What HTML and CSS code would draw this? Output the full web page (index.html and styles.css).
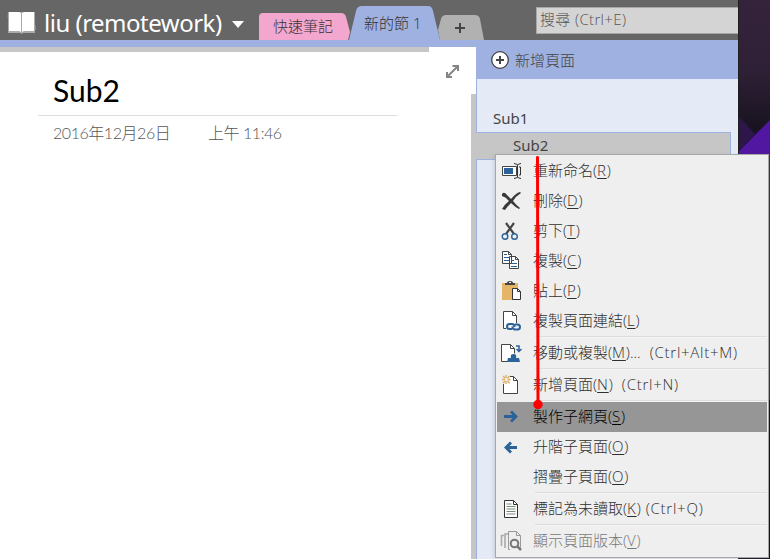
FILE: index.html
```html
<!DOCTYPE html>
<html lang="zh-Hant">
<head>
<meta charset="utf-8">
<title>Sub2</title>
<link rel="stylesheet" href="styles.css">
</head>
<body>
<div class="screen">
  <svg class="wallpaper" width="32" height="559" viewBox="0 0 32 559">
    <defs><linearGradient id="wall" x1="0" y1="0" x2="0" y2="1"><stop offset="0" stop-color="#35233c"/><stop offset=".55" stop-color="#2e2036"/><stop offset="1" stop-color="#181320"/></linearGradient></defs>
    <rect width="32" height="559" fill="#1c1229"/><rect width="32" height="130" fill="url(#wall)"/>
    <path d="M0 115L17 134L0 151Z" fill="#2c164a"/><path d="M32 120L0 152V400H32Z" fill="#5117a0"/><path d="M0 400H32V559H0Z" fill="#180c2b"/>
    <path d="M.5 0V559" stroke="#202020"/>
  </svg>
  <main class="window">
    <header class="topbar">
      <svg class="book" width="30" height="23" viewBox="0 0 30 23"><path fill="#d84e2b" d="M0 2h4v5H0z"/><path fill="#2f79bd" d="M25 8h4v5h-4z"/><path fill="#4aa088" d="M25 14h4v5h-4z"/><path fill="#aaa" d="M1 1h27v21H16l-1.500 1L13 22H1z"/><path fill="#fff" d="M2 1h10l2 1v19l-2-1H2zM15 2l2-1h10v19H17l-2 1z"/></svg>
      <span class="notebook">liu (remotework)</span>
      <svg class="caret" width="12" height="8" viewBox="0 0 12 8"><path fill="#fff" d="M0 1h12L6 8z"/></svg>
      <nav class="tabs">
        <div class="tab quick"><svg width="92" height="27" viewBox="0 0 92 27"><path fill="#f3a6ce" d="M0 27V4Q0 0 4 0H82Q86 0 87 4L91 19L89 27Z"/></svg><span>快速筆記</span></div>
        <div class="tab current"><svg width="92" height="34" viewBox="0 0 92 34"><path fill="#9fb1e1" d="M0 34L7 5Q8 0 13 0H79Q83 0 84 5L91 34Z"/></svg><span>新的節 1</span></div>
        <div class="tab add"><svg width="46" height="25" viewBox="0 0 46 25"><path fill="#b1b1b1" d="M2 25L0 15L3 4Q4 0 8 0H37Q41 0 42 4L46 25Z"/><path d="M22 8v10M17 13h10" stroke="#444" stroke-width="2"/></svg></div>
      </nav>
      <div class="search">搜尋 (Ctrl+E)</div>
    </header>
    <div class="workspace">
      <section class="editor">
        <div class="canvas">
          <div class="ruler"></div>
          <svg class="expand" width="13" height="13" viewBox="0 0 13 13"><path d="M2 11L11 2M6.500 1H12V6M1 7v5h5" fill="none" stroke="#858585" stroke-width="2"/></svg>
          <h1>Sub2</h1>
          <div class="stamp"><span class="date">2016年12月26日</span><span class="time">上午 11:46</span></div>
        </div>
        <div class="scroll"></div>
      </section>
      <aside class="pages">
        <div class="new-page"><svg width="18" height="18" viewBox="0 0 18 18"><circle cx="9" cy="9" r="8.300" fill="#fff" stroke="#444" stroke-width="1.300"/><path d="M9 5v8M5 9h8" stroke="#444" stroke-width="2"/></svg><span>新增頁面</span></div>
        <div class="list"><div class="page">Sub1</div><div class="page chosen">Sub2</div><div class="rest"></div></div>
      </aside>
    </div>
  </main>
  <div class="menu">
    <div class="item"><svg viewBox="0 0 20 20"><path fill="#fff" stroke="#444" d="M.5 5.500H14.500V14.500H.5z"/><path fill="#2b6299" d="M2 7h9v6H2z"/><path d="M15.500 4v12M12 2.500l3.500 1L19 2.500M12 17.500l3.500-1 3.500 1M17 6h1.500v8H17" fill="none" stroke="#333"/></svg><span>重新命名(<u>R</u>)</span></div>
    <div class="item"><svg viewBox="0 0 20 20"><path fill="#383838" d="M0 3Q2 0 5 4L9 8Q14 2 18 1L19 2Q14 5 11 10Q15 15 18 17L17 18Q13 16 9 12Q5 16 3 19L0 18Q3 13 7 10Q4 6 0 5Z"/></svg><span>刪除(<u>D</u>)</span></div>
    <div class="item"><svg viewBox="0 0 20 20"><path d="M4 2l8 11M12 2L4 13" stroke="#444" stroke-width="2.200"/><circle cx="3" cy="15.500" r="2.800" fill="#efefef" stroke="#2b6299" stroke-width="1.400"/><circle cx="12.500" cy="15.500" r="2.800" fill="#efefef" stroke="#2b6299" stroke-width="1.400"/></svg><span>剪下(<u>T</u>)</span></div>
    <div class="item"><svg viewBox="0 0 20 20"><path fill="#fff" stroke="#444" d="M.5 .5h6l3 3v9h-9zM7.500 5.500h6l3 3v9h-9z"/><path d="M6.500 .5v3h3M13.500 5.500v3h3" fill="none" stroke="#444"/><path d="M2 3.500h3M2 6.500h5M2 9.500h5M9 9.500h3M9 12.500h6M9 15.500h6" stroke="#2b6299"/></svg><span>複製(<u>C</u>)</span></div>
    <div class="item"><svg viewBox="0 0 20 20"><path fill="#e5b567" d="M0 2h16v17H0z"/><path fill="#444" d="M3 4V2h2q0-2 3-2t3 2h2v2z"/><path fill="#efefef" d="M7 1h2v1H7z"/><path fill="#fff" stroke="#333" d="M10.500 7.500h5l3 3v8h-8z"/><path d="M15.500 7.500v3h3" fill="none" stroke="#333"/></svg><span>貼上(<u>P</u>)</span></div>
    <div class="item"><svg viewBox="0 0 20 20"><path fill="#fff" stroke="#444" d="M1.500 .5h9l4 4v13h-13z"/><path d="M10.500 .5v4h4" fill="none" stroke="#444"/><path d="M4 12h15v8H4z" fill="#efefef"/><path d="M10 18H7.500q-2.500 0-2.500-2.500T7.500 13H10q2.500 0 2.500 3M13 13.500h2.500q2.500 0 2.500 2.500t-2.500 2.500H13q-2.500 0-2.500-3" fill="none" stroke="#2b6299" stroke-width="2"/></svg><span>複製頁面連結(<u>L</u>)</span></div>
    <hr>
    <div class="item"><svg viewBox="0 0 20 20"><path fill="#fff" d="M0 1h9l4 4v13H0z"/><path d="M6 18.500H-.5v-17h9l4 4v5M8.500 1.500v4h4" fill="none" stroke="#444"/><path d="M5 19l1-4h3q-1-4 2.500-4t2.500 4h3l1 4z" fill="#2b6299"/><path d="M14 3h3v5M14.500 6l2.500 2.500L19.500 6" fill="none" stroke="#2b6299" stroke-width="1.500"/></svg><span>移動或複製(<u>M</u>)...<i class="key wide">(Ctrl+Alt+M)</i></span></div>
    <hr>
    <div class="item"><svg viewBox="0 0 20 20"><path fill="#fff" stroke="#444" d="M1.500 6.500V18.500h14V5.500l-4-4h-4v5z"/><path fill="#efefef" d="M0 0h8v9H0z"/><path d="M11.500 1.500v4h4" fill="none" stroke="#444"/><path d="M4 0v3M4 6v3M0 4.500h3M5.500 4.500h3M1 1l2 2M5.500 6l2 2M7.500 1l-2 2M3 6L1 8" stroke="#e0ac60" stroke-width="1.300"/></svg><span>新增頁面(<u>N</u>)<i class="key wide">(Ctrl+N)</i></span></div>
    <hr>
    <div class="item active"><svg viewBox="0 0 20 20"><path d="M2 9.500h11M9 4.500l5 5-5 5" fill="none" stroke="#2b6299" stroke-width="2.800"/></svg><span>製作子網頁(<u>S</u>)</span></div>
    <div class="item"><svg viewBox="0 0 20 20"><path d="M4 10.500h11M9 5.500l-5 5 5 5" fill="none" stroke="#2b6299" stroke-width="2.800"/></svg><span>升階子頁面(<u>O</u>)</span></div>
    <div class="item"><svg viewBox="0 0 20 20"></svg><span>摺疊子頁面(<u>O</u>)</span></div>
    <hr>
    <div class="item"><svg viewBox="0 0 20 20"><path fill="#fff" stroke="#333" d="M2.500 1.500h9l4 4v13h-13z"/><path d="M11.500 1.500v4h4" fill="none" stroke="#333"/><path d="M4.500 5h5M4.500 7.500h9M4.500 10h9M4.500 12.500h9M4.500 15h9" stroke="#788b79"/></svg><span>標記為未讀取(<u>K</u>)<i class="key">(Ctrl+Q)</i></span></div>
    <hr>
    <div class="item disabled"><svg viewBox="0 0 20 20"><path d="M-.5 15V4.500H2M3 17V3h3" fill="none" stroke="#aaa" stroke-width="1.600"/><path d="M8 18.500H6.500V.5h8l4 4v12M14.500 .5v4h4" fill="none" stroke="#999"/><path d="M15.500 15.500l3.500 3.500" stroke="#777" stroke-width="2.500"/><circle cx="12.500" cy="12.500" r="3.800" fill="#efefef" stroke="#777" stroke-width="2"/></svg><span>顯示頁面版本(<u>V</u>)</span></div>
  </div>
  <svg class="pointer" width="12" height="254" viewBox="0 0 12 254"><path d="M5.500 2.500L6 249" stroke="#fe0000" stroke-width="3" stroke-linecap="round"/><circle cx="6" cy="249.500" r="4.700" fill="#fe0000"/></svg>
</div>
</body>
</html>
```
FILE: styles.css
```css
* { box-sizing: border-box; }
body { margin: 0; font: 300 15px "Open Sans", "Noto Sans CJK TC", sans-serif; color: #444; }
.screen { position: relative; width: 770px; height: 559px; overflow: hidden; background: #c4c8d8; }
.wallpaper { position: absolute; left: 738px; top: 0; }
.window { width: 738px; height: 559px; display: flex; flex-direction: column; background: #fff; }
.topbar { height: 40px; flex: none; display: flex; background: #666; overflow: hidden; }
.book { margin: 11px 0 0 7px; flex: none; }
.notebook { width: 180px; margin-left: 7px; font: 400 24px/45px "Noto Sans", sans-serif; color: #fff; white-space: nowrap; letter-spacing: -.5px; }
.caret { margin: 20px 0 0 8px; flex: none; }
.tabs { display: flex; align-items: flex-end; margin-left: 15px; width: 277px; flex: none; }
.tab { display: grid; }
.tab > * { grid-area: 1 / 1; display: block; }
.tab span { padding-left: 14px; line-height: 27px; font-weight: 300; color: #333; white-space: nowrap; }
.current { margin-left: -2px; }
.current span { line-height: 34px; padding-left: 15px; }
.add { margin-left: -3px; }
.search { width: 202px; height: 27px; margin-top: 7px; padding-left: 3px; border: 1px solid #a8a8a8; border-right: 0; background: #d4d4d4; color: #555; line-height: 22px; letter-spacing: .35px; }
.workspace { display: flex; flex: 1; }
.editor { width: 476px; border-top: 7px solid #9fb1e1; display: flex; background: #fff; }
.canvas { width: 471px; display: grid; grid-template: 5px 16px 48px auto / 38px 359px 48px auto; }
.ruler { grid-area: 1 / 1 / 2 / 4; width: 429px; height: 5px; background: #c6c6c6; }
.expand { grid-area: 2 / 4 / 4 / 5; margin: 13px 0 0 1px; }
h1 { grid-area: 3 / 2; margin: 0; padding-left: 15px; border-bottom: 1px solid #ddd; font: 400 30px/45px Lato, sans-serif; color: #000; }
.stamp { grid-area: 4 / 2; padding-left: 15px; display: flex; height: 34px; line-height: 34px; font-family: Lato, "Noto Sans CJK TC", sans-serif; font-size: 16px; color: #555; white-space: nowrap; letter-spacing: -.45px; }
.date { width: 155px; }
.scroll { width: 5px; margin-top: 47px; background: #c6c6c6; }
.pages { width: 262px; display: flex; flex-direction: column; }
.new-page { height: 39px; display: flex; align-items: center; gap: 6px; padding-left: 15px; background: #9fb1e1; }
.list { flex: 1; display: flex; flex-direction: column; background: #e4eaf6; }
.page { height: 53px; padding: 25px 0 0 16px; border-left: 1px solid #9fb1e1; font: 400 15px/28px "Noto Sans", sans-serif; }
.chosen { width: 255px; height: 28px; padding: 0 0 0 37px; line-height: 25px; background: #c6c6c6; border: solid #9fb1e1; border-width: 1px 1px 1px 0; }
.rest { flex: 1; border-left: 1px solid #9fb1e1; }
.menu { position: absolute; left: 495px; top: 154px; width: 274px; height: 404px; padding: 1px 0; border: 1px solid #a7a7a7; background: #efefef; box-shadow: -2px 1px 3px #8883; color: #303030; }
.item { height: 30px; margin: 0 1px; padding-left: 5px; display: flex; align-items: center; gap: 11px; white-space: nowrap; }
.item span { padding-bottom: 4px; }
.item svg { width: 20px; height: 20px; flex: none; overflow: visible; }
.item u { text-underline-offset: 2px; text-decoration-thickness: 1px; letter-spacing: .8px; }
.key { font-style: normal; margin-left: 5px; letter-spacing: .75px; }
.key.wide { margin-left: 9px; }
.menu hr { height: 2px; margin: 0 1px 0 39px; border: 0; border-top: 1px solid #ddd; background: #f3f3f3; }
.active { background: #969696; color: #000; }
.disabled { color: #777; }
.pointer { position: absolute; left: 532px; top: 155px; }
```
